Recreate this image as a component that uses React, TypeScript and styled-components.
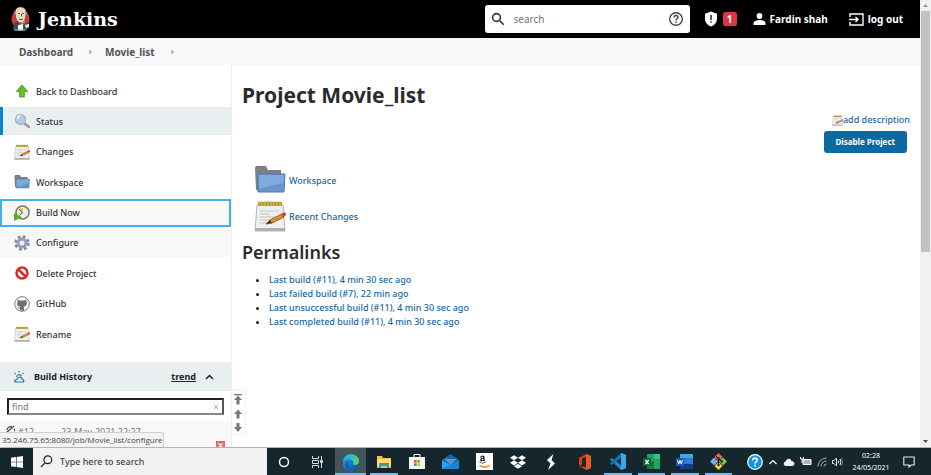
import React from "react";
import styled, { createGlobalStyle } from "styled-components";
import { SiDropbox } from "react-icons/si";
import { FaAmazon } from "react-icons/fa";

const Global = createGlobalStyle`
  * { box-sizing: border-box; }
  body { margin: 0; font-family: "Noto Sans", "Open Sans", sans-serif; font-size: 9px; color: #333; background: #fff; }
  button, input { font: inherit; color: inherit; }
  a { color: inherit; text-decoration: none; }
  svg { display: block; flex: none; }
`;

const Screen = styled.div`
  display: flex;
  flex-direction: column;
  height: 100vh;
  overflow: hidden;
`;
const Browser = styled.div`
  position: relative;
  display: flex;
  flex: 1;
  min-height: 0;
`;
const Page = styled.div`
  flex: 1;
  min-width: 0;
  display: flex;
  flex-direction: column;
`;
const Header = styled.header`
  display: flex;
  align-items: center;
  flex: none;
  height: 38px;
  padding: 0 17px 0 10px;
  background: #000;
  color: #fff;
`;
const Brand = styled.a`
  display: flex;
  align-items: center;
  gap: 7px;
  margin-right: auto;
  font: 700 19px/24px "DejaVu Serif", serif;
`;
const SearchBox = styled.label`
  display: flex;
  align-items: center;
  gap: 9px;
  width: 205px;
  height: 28px;
  padding: 0 6px;
  border-radius: 3px;
  background: #fff;
  color: #333;
`;
const SearchInput = styled.input`
  flex: 1;
  min-width: 0;
  padding: 0;
  border: 0;
  outline: 0;
  background: none;
  font-size: 10px;
  &::placeholder { color: #757575; opacity: 1; }
`;
const IconButton = styled.button`
  display: flex;
  align-items: center;
  justify-content: center;
  padding: 0;
  border: 0;
  background: none;
`;
const Alerts = styled.button`
  display: flex;
  align-items: center;
  gap: 5px;
  margin: 0 16px 0 14px;
  padding: 0;
  border: 0;
  background: none;
`;
const Badge = styled.span`
  width: 14px;
  border-radius: 2px;
  background: #dc3545;
  color: #fff;
  font-size: 10px;
  font-weight: 700;
  line-height: 14px;
  text-align: center;
`;
const HeaderLink = styled.a`
  display: flex;
  align-items: center;
  gap: 4px;
  font-size: 10px;
  font-weight: 700;
  line-height: 14px;
  & + & { margin-left: 21px; }
`;
const Breadcrumbs = styled.nav`
  display: flex;
  align-items: center;
  flex: none;
  height: 27px;
  padding-left: 19px;
  background: #f8f8f8;
  color: #4d545d;
  font-size: 10px;
  font-weight: 700;
`;
const Crumb = styled.a`
  display: flex;
  align-items: center;
  gap: 16px;
  margin-right: 12px;
`;
const Body = styled.div`
  display: flex;
  flex: 1;
  min-height: 0;
`;
const SidePanel = styled.aside`
  display: flex;
  flex-direction: column;
  flex: none;
  width: 232px;
  overflow: hidden;
  border-right: 1px solid #efefef;
`;
const Tasks = styled.ul`
  display: grid;
  align-content: space-between;
  height: 271px;
  margin: 12px 0 14px;
  padding: 0;
  flex: none;
  list-style: none;
`;
const shades = { plain: "transparent", active: "#e9eef1", hover: "#f8f8f8", focus: "#f8f8f8" };
const TaskLink = styled.a<{ $state: keyof typeof shades }>`
  display: flex;
  align-items: center;
  gap: 6px;
  height: 28px;
  padding-left: ${(p) => (p.$state === "active" || p.$state === "focus" ? 11 : 14)}px;
  background: ${(p) => shades[p.$state]};
  border: 0 solid ${(p) => (p.$state === "active" ? "#0b82cf" : "#45b0f0")};
  border-width: ${(p) => (p.$state === "focus" ? "2px" : p.$state === "active" ? "0 0 0 3px" : "0")};
  ${(p) => p.$state === "focus" && "padding-left: 12px;"}
  font-weight: 500;
`;
const HistoryHead = styled.div`
  display: flex;
  align-items: center;
  flex: none;
  height: 29px;
  padding: 0 17px 0 13px;
  background: #e9eef1;
  font-weight: 700;
  color: #222;
`;
const HistoryTitle = styled.h2`
  margin: 0 auto 0 9px;
  font-size: 9px;
`;
const Trend = styled.a`
  margin-right: 9px;
  text-decoration: underline;
`;
const Find = styled.label`
  display: flex;
  align-items: center;
  flex: none;
  height: 17px;
  margin: 7px 7px 6px;
  padding: 0 3px;
  border: 2px solid #222;
  border-bottom-color: #888;
  border-right-color: #555;
  color: #aaa;
`;
const FindInput = styled.input`
  flex: 1;
  min-width: 0;
  padding: 0;
  border: 0;
  outline: 0;
  &::placeholder { color: #777; opacity: 1; }
`;
const BuildTable = styled.table`
  width: 100%;
  border-collapse: collapse;
  background: #f8f8f8;
  color: #777;
`;
const BuildCell = styled.td<{ $w?: number }>`
  width: ${(p) => (p.$w ? p.$w + "px" : "auto")};
  height: 20px;
  padding: 4px 0 0;
  line-height: 13px;
  vertical-align: top;
  &:first-child { padding-left: 5px; }
`;
const CancelCell = styled(BuildCell)`
  height: 12px;
  padding: 0 6px 0 0;
`;
const Cancel = styled(IconButton)`
  width: 9px;
  height: 9px;
  margin-left: auto;
  background: #dc6a6a;
  color: #fff;
`;
const Pager = styled.div`
  position: absolute;
  left: 232px;
  bottom: 12px;
  display: grid;
  gap: 3px;
  padding: 4px 1px 1px 0;
  border: 1px solid #f0f0f0;
  border-left: 0;
  border-radius: 0 3px 3px 0;
  background: #fff;
`;
const Main = styled.main`
  flex: 1;
  min-width: 0;
  padding: 16px 10px;
`;
const Title = styled.h1`
  margin: 0;
  font-size: 21px;
  line-height: 29px;
  color: #2b2b2b;
`;
const Actions = styled.div`
  display: flex;
  flex-direction: column;
  align-items: flex-end;
  gap: 4px;
  margin-top: 3px;
  color: #20679f;
`;
const Describe = styled.a`
  display: flex;
  align-items: center;
  font-weight: 500;
  line-height: 14px;
`;
const Disable = styled.button`
  margin-right: 3px;
  padding: 0 12px;
  border: 0;
  border-radius: 3px;
  background: #0b6aa2;
  color: #fff;
  font-size: 8px;
  font-weight: 700;
  line-height: 22px;
`;
const Shortcuts = styled.div`
  display: grid;
  gap: 4px;
  justify-items: start;
  margin: 11px 0 0 12px;
`;
const Shortcut = styled.a`
  display: flex;
  align-items: center;
  gap: 3px;
  height: 32px;
  color: #20679f;
  font-weight: 500;
`;
const Subtitle = styled.h2`
  margin: 7px 0 8px;
  font-size: 18px;
  font-weight: 600;
  line-height: 26px;
  color: #2b2b2b;
`;
const Permalinks = styled.ul`
  margin: 0;
  padding-left: 27px;
  line-height: 14px;
  font-weight: 500;
  color: #222;
  a { color: #20679f; }
`;
const Scrollbar = styled.div`
  display: flex;
  flex-direction: column;
  align-items: center;
  flex: none;
  width: 11px;
  background: #f1f1f1;
  padding: 4px 0;
`;
const Thumb = styled.div`
  width: 9px;
  height: 55%;
  margin: 4px 0 auto;
  background: #c1c1c1;
`;
const StatusBubble = styled.div`
  position: absolute;
  left: 0;
  bottom: 0;
  padding: 0 1px 0 2px;
  border: 1px solid #d0d0d0;
  border-width: 1px 1px 0 0;
  border-radius: 0 3px 0 0;
  background: #f3f3f3;
  font: 400 8px/14px "Open Sans", sans-serif;
  color: #444;
`;
const Taskbar = styled.footer`
  display: flex;
  flex: none;
  height: 28px;
  border-top: 1px solid #b5b5b5;
  background: #16262d;
  color: #e8eaeb;
`;
const Start = styled(IconButton)`
  width: 33px;
  color: #fff;
`;
const TaskSearch = styled.label`
  display: flex;
  align-items: center;
  gap: 7px;
  width: 234px;
  padding-left: 7px;
  background: #f2f2f2;
  color: #333;
`;
const TaskSearchInput = styled.input`
  flex: 1;
  min-width: 0;
  padding: 0;
  border: 0;
  outline: 0;
  background: none;
  font-weight: 500;
  &::placeholder { color: #444; opacity: 1; }
`;
const Apps = styled.div`
  display: grid;
  grid-template-columns: repeat(14, 1fr);
  width: 468px;
`;
const AppButton = styled(IconButton)<{ $open?: boolean; $current?: boolean }>`
  margin: 0 3px;
  border-bottom: 2px solid ${(p) => (p.$open ? "#76b9ed" : "transparent")};
  padding-top: 2px;
  ${(p) => p.$current && "margin: 0 1px; background: #45535a;"}
`;
const Tray = styled.div`
  display: flex;
  align-items: center;
  gap: 5px;
  margin-left: auto;
  padding-right: 16px;
`;
const Clock = styled.time`
  width: 42px;
  margin: 0 6px 0 2px;
  font-size: 7px;
  line-height: 12px;
  text-align: center;
  white-space: pre-line;
  color: #fff;
`;

const Butler = () => (
  <svg width="21" height="28" viewBox="0 0 21 28">
    <ellipse cx="10.5" cy="14" rx="9" ry="9.5" fill="#d33833" />
    <path d="M3 24l1-6 4-2h6l4 2 1 5-5 3H6z" fill="#34505f" />
    <path d="M8 16l4 6 3-6z" fill="#f5f5f5" />
    <path d="M5 8c0-4 2-6 5.500-6S16 4 16 8l-.5 5c-.5 3-2.500 5-4.500 5S6.500 16 5.500 12z" fill="#efd9be" stroke="#3c2b22" strokeWidth=".6" />
    <path d="M5 5v5l-1-2zM15 4l2 4-1 4-1-3z" fill="#a99b8b" />
    <path d="M8 8.500h2m2 0h2M9 14q2 1.500 4 0M11.500 9v2.500" stroke="#3c2b22" strokeWidth=".8" fill="none" />
    <path d="M9 17l3 1.500 4-1.500v3l-4-1-3 1z" fill="#d33833" />
    <path d="M8 20h5v5.500H8z" fill="#f7f9fc" />
    <path d="M15 20l4-1v3l-3 1z" fill="#e8edf4" />
    <path d="M4 25h12" stroke="#7ca4b5" strokeWidth="1" />
  </svg>
);
const Folder = ({ s = 16 }) => (
  <svg width={s} height={s} viewBox="0 0 32 32">
    <path d="M1 4q0-2 2-2h9l2 4h13v20H2z" fill="#7d8183" />
    <path d="M4 10h27l-1 18H4z" fill="#6797cd" stroke="#4a7ab3" />
    <path d="M5 11h25l-.5 8Q18 21 5 25z" fill="#8ab2df" opacity=".7" />
  </svg>
);
const Notepad = ({ s = 16 }) => (
  <svg width={s} height={s} viewBox="0 0 32 32">
    <path d="M3 5h26l2 26H1z" fill="#efefef" stroke="#b5b5b5" />
    <path d="M1 28h30v3H1z" fill="#b0b0b0" />
    <path d="M4 2h24v4H4z" fill="#a29536" />
    <path d="M5 1v5m3-5v5m3-5v5m3-5v5m3-5v5m3-5v5m3-5v5m3-5v5" stroke="#d0c04a" strokeWidth="1.300" />
    <path d="M6 11h19M6 14h10M6 17h17M6 20h10M6 23h8" stroke="#c4c4c4" />
    <path d="M12 24l4-4 12-6 2 3-12 6z" fill="#dc9434" stroke="#8a6428" />
    <path d="M12 24l4-4 2 3z" fill="#463b2c" />
    <path d="M27 14l4-2 1.500 3-4 2z" fill="#e33b2e" />
  </svg>
);
const icons = {
  up: (
    <svg width="16" height="16" viewBox="0 0 16 16">
      <path d="M8 2l6 6.500h-3.500V14h-5V8.500H2z" fill="#5cb324" stroke="#438c1b" strokeWidth=".6" />
      <path d="M8 3l4 5H9.500v5H6.500" fill="#75cc38" opacity=".5" />
    </svg>
  ),
  lens: (
    <svg width="16" height="16" viewBox="0 0 16 16">
      <path d="M10 10l5 4" stroke="#96989b" strokeWidth="2.500" strokeLinecap="round" />
      <circle cx="6.500" cy="6.500" r="5" fill="#aecdef" stroke="#b1b6be" strokeWidth="1.500" />
      <path d="M3.500 6a3 3 0 013-3" stroke="#fff" fill="none" strokeWidth="1.500" />
    </svg>
  ),
  clock: (
    <svg width="16" height="16" viewBox="0 0 16 16">
      <circle cx="8.500" cy="7.500" r="6.500" fill="#f0f0df" stroke="#777b7e" strokeWidth="1.600" />
      <path d="M8.500 8L5 4l4-1z" fill="#dac23d" />
      <path d="M5 4l3.500 4-3 2" stroke="#555" fill="none" />
      <path d="M0 8l8 4-8 4z" fill="#52b51f" />
    </svg>
  ),
  gear: (
    <svg width="16" height="16" viewBox="0 0 16 16">
      <circle cx="8" cy="8" r="6" fill="none" stroke="#8187a6" strokeWidth="3.500" strokeDasharray="2.600 2.110" />
      <circle cx="8" cy="8" r="4" fill="#eee" stroke="#979cb8" strokeWidth="3" />
    </svg>
  ),
  stop: (
    <svg width="16" height="16" viewBox="0 0 16 16">
      <circle cx="8" cy="8" r="5.500" fill="#fff" stroke="#d52b2b" strokeWidth="2.500" />
      <path d="M4 4l8 8" stroke="#d52b2b" strokeWidth="2.500" />
    </svg>
  ),
  github: (
    <svg width="16" height="16" viewBox="0 0 16 16">
      <circle cx="8" cy="8" r="7.300" fill="#fff" stroke="#777" />
      <path d="M3.800 3.500l2 1.100h4.400l2-1.100c.6 1 .3 2 .4 2.600 1 3-.8 4.400-3 4.700.5.600.6 1.200.6 3.700H6v-2c-1.300.2-2-.3-2.500-1.300 1 .2 1.400.8 2.500.4 0-.4.200-.6.400-.8-2.800-.4-4-2-3-4.700z" fill="#707070" />
    </svg>
  ),
  note: <Notepad />,
  folder: <Folder />,
};
const tasks: [string, keyof typeof icons, keyof typeof shades][] = [
  ["Back to Dashboard", "up", "plain"],
  ["Status", "lens", "active"],
  ["Changes", "note", "plain"],
  ["Workspace", "folder", "plain"],
  ["Build Now", "clock", "focus"],
  ["Configure", "gear", "hover"],
  ["Delete Project", "stop", "plain"],
  ["GitHub", "github", "plain"],
  ["Rename", "note", "plain"],
];
const permalinks = [
  "Last build (#11), 4 min 30 sec ago",
  "Last failed build (#7), 22 min ago",
  "Last unsuccessful build (#11), 4 min 30 sec ago",
  "Last completed build (#11), 4 min 30 sec ago",
];

const Sep = () => (
  <svg width="4" height="6" viewBox="0 0 4 6"><path d="M.5 1L3 3 .5 5z" fill="#aaa" stroke="#aaa" strokeWidth=".5" /></svg>
);
const Magnifier = () => (
  <svg width="14" height="14" viewBox="0 0 14 14" fill="none" stroke="currentColor" strokeWidth="1.600"><circle cx="5.500" cy="5.500" r="3.900" /><path d="M8.500 8.500l4.300 4.300" /></svg>
);
const Arrow = ({ kind }: { kind: "top" | "up" | "down" }) => (
  <svg width="12" height="11" viewBox="0 0 12 11" fill="#777">
    {kind === "down" ? <path d="M4.500 1h3v4H10l-4 5-4-5h2.500z" /> : <path d="M6 1.500l4 4.500H7.500v4.500h-3V6H2z" />}
    {kind === "top" && <path d="M2 0h8v1.300H2z" />}
  </svg>
);
const ScrollArrow = ({ down = false }) => (
  <svg width="5" height="3" viewBox="0 0 5 3"><path d={down ? "M0 0h5L2.500 3z" : "M0 3h5L2.500 0z"} fill={down ? "#505050" : "#999"} /></svg>
);

const apps: { name: string; open?: boolean; current?: boolean; icon: React.ReactNode }[] = [
  { name: "Cortana", icon: <svg width="12" height="12" viewBox="0 0 12 12"><circle cx="6" cy="6" r="4.500" fill="none" stroke="#fff" strokeWidth="1.500" /></svg> },
  { name: "Task View", icon: <svg width="13" height="12" viewBox="0 0 13 12" fill="none" stroke="#d5dadc"><path d="M1.500 0v2.500h6V0M1.500 12V9.500h6V12M1.500 4.500h6v3h-6zM10.500 0v12" /><path d="M9.500 4.500h2v2h-2z" fill="#d5dadc" /></svg> },
  {
    name: "Edge", open: true, current: true,
    icon: (
      <svg width="18" height="18" viewBox="0 0 18 18">
        <defs>
          <linearGradient id="edgeTop" x2="1"><stop stopColor="#28a6e6" /><stop offset=".6" stopColor="#2fc3c5" /><stop offset="1" stopColor="#66d657" /></linearGradient>
          <linearGradient id="edgeBase" x2="1" y2="1"><stop stopColor="#1a9ae0" /><stop offset="1" stopColor="#0c4ea5" /></linearGradient>
        </defs>
        <path d="M1 9a8 8 0 0016 3c-3 2-7 1-7-3 0-3-8-4-9 0z" fill="url(#edgeBase)" />
        <path d="M1 9C1 4 5 1 9 1s8 3 8 7c0 3-2 4-4 4s-3-1-2-2.500C11 6 4 5 1 9z" fill="url(#edgeTop)" />
        <path d="M7 8c-2 4 1 8 5 8.500A8 8 0 014 15C2 11 4 8 7 8z" fill="#125fb5" />
      </svg>
    ),
  },
  { name: "File Explorer", open: true, icon: <svg width="16" height="14" viewBox="0 0 16 14"><path d="M1 1h5l1 2h8v10H1z" fill="#f5c043" /><path d="M1 4h14v7H1z" fill="#ffdc77" /><path d="M3 8h10v5h-2v-2H5v2H3z" fill="#3d91d1" /></svg> },
  { name: "Store", icon: <svg width="16" height="17" viewBox="0 0 16 17"><path d="M5 5V1.500h6V5" fill="none" stroke="#fff" /><path d="M0 4h16v12H0z" fill="#f4f4f4" /><path d="M5 7h2.700v2.700H5z" fill="#f25022" /><path d="M8.300 7H11v2.700H8.300z" fill="#7fba00" /><path d="M5 10.300h2.700V13H5z" fill="#00a4ef" /><path d="M8.300 10.300H11V13H8.300z" fill="#ffb900" /></svg> },
  { name: "Mail", icon: <svg width="17" height="16" viewBox="0 0 17 16"><path d="M0 6l8.500-6L17 6z" fill="#1268b8" /><path d="M0 6h17l-8.500 5z" fill="#0f5ca8" /><path d="M2 5h13l-6.500 6z" fill="#eef6fc" opacity=".35" /><path d="M0 6l8.500 5L17 6v9H0z" fill="#2aa7ec" /><path d="M0 15l17-9v9z" fill="#1a83d2" /></svg> },
  { name: "Amazon", icon: <svg width="17" height="17" viewBox="0 0 17 17"><path d="M0 0h17v17H0z" fill="#fff" /><g color="#222"><FaAmazon x="2" y="2" width="13" height="13" /></g><path d="M3.500 12.500q5 3 10 0" fill="none" stroke="#f29a2e" strokeWidth="1.800" /></svg> },
  { name: "Dropbox", icon: <SiDropbox size="16" color="#fff" /> },
  { name: "Stripes", icon: <svg width="10" height="16" viewBox="0 0 10 16"><path d="M7.500 0L1 6l3.500 3.500L2 16l7-6.500L5.500 6z" fill="#fff" /></svg> },
  { name: "Office", icon: <svg width="14" height="16" viewBox="0 0 14 16"><path d="M1 4l7-4 5 2v12l-5 2-7-4 7 1V3L4 4.500v6L1 12z" fill="#e03c13" /><path d="M8 0l5 2v12l-5 2z" fill="#f0591e" /></svg> },
  { name: "Visual Studio Code", open: true, icon: <svg width="17" height="17" viewBox="0 0 17 17"><path d="M12 0l5 2v13l-5 2L1 6.500 2.500 5 12 12z" fill="#2489ca" /><path d="M12 0v5L2.500 12 1 10.500z" fill="#1070b3" /><path d="M12 0l5 2v13l-5 2z" fill="#3ba6f0" /></svg> },
  { name: "Excel", open: true, icon: <svg width="17" height="15" viewBox="0 0 17 15"><path d="M4 0h13v15H4z" fill="#21a366" /><path d="M4 7h7v8H4z" fill="#107c41" /><path d="M11 0h6v5h-6z" fill="#33c481" /><path d="M0 4h8v8H0z" fill="#0d6537" /><path d="M2.500 6l3.200 4.200M5.700 6l-3.200 4.200" stroke="#fff" strokeWidth="1.300" /></svg> },
  { name: "Word", open: true, icon: <svg width="17" height="15" viewBox="0 0 17 15"><path d="M4 0h13v15H4z" fill="#2b7cd3" /><path d="M4 0h13v4H4z" fill="#41a5ee" /><path d="M4 10h13v5H4z" fill="#103f91" /><path d="M0 4h8v8H0z" fill="#185abd" /><path d="M1.500 6l1.200 4L4 6.500 5.300 10l1.200-4" stroke="#fff" fill="none" /></svg> },
  { name: "Git", open: true, icon: <svg width="17" height="17" viewBox="0 0 17 17"><path d="M8.500 0l4 4-4 4.500-4-4.500z" fill="#ec6656" /><path d="M4 4.500l4 4-4 4-4-4z" fill="#77aaf0" /><path d="M13 4.500l4 4-4 4-4-4z" fill="#7cc944" /><path d="M8.500 9l4 4-4 4-4-4z" fill="#f5d24a" /><path d="M6 3l5.500 5.500M8.500 6v7" stroke="#222" strokeWidth="1" /><circle cx="8.500" cy="5.500" r="1.200" fill="#222" /><circle cx="11.800" cy="8.500" r="1.200" fill="#222" /><circle cx="8.500" cy="12" r="1.200" fill="#222" /></svg> },
];

export default function App() {
  return (
    <Screen>
      <Global />
      <Browser>
        <Page>
          <Header>
            <Brand href="#"><Butler />Jenkins</Brand>
            <SearchBox>
              <Magnifier />
              <SearchInput placeholder="search" aria-label="Search" />
              <IconButton aria-label="Help">
                <svg width="16" height="16" viewBox="0 0 16 16" fill="none" stroke="#3f474f" strokeWidth="1.400"><circle cx="8" cy="8" r="6.300" /><path d="M6 6.500a2 2 0 114 0c0 1.200-2 1.400-2 3M8 10.500v1.400" /></svg>
              </IconButton>
            </SearchBox>
            <Alerts aria-label="Security warnings">
              <svg width="14" height="16" viewBox="0 0 14 16"><path d="M7 .5l6 2.300v4.700c0 3.800-2.500 6.800-6 8-3.500-1.200-6-4.200-6-8V2.800z" fill="#fff" /><path d="M7 4v5M7 10.200v1.600" stroke="#222" strokeWidth="1.500" /></svg>
              <Badge>1</Badge>
            </Alerts>
            <HeaderLink href="#user">
              <svg width="13" height="12" viewBox="0 0 13 12" fill="#fff"><circle cx="6.500" cy="3" r="2.900" /><path d="M.5 12v-2c0-2 4-3 6-3s6 1 6 3v2z" /></svg>
              Fardin shah
            </HeaderLink>
            <HeaderLink href="#logout">
              <svg width="15" height="13" viewBox="0 0 15 13" fill="none" stroke="#fff" strokeWidth="1.400"><path d="M1 4V1h13v11H1V9M0 6.500h9M6.500 4l2.500 2.500L6.500 9" /></svg>
              log out
            </HeaderLink>
          </Header>
          <Breadcrumbs aria-label="Breadcrumb">
            <Crumb href="#dashboard">Dashboard<Sep /></Crumb>
            <Crumb href="#movie">Movie_list<Sep /></Crumb>
          </Breadcrumbs>
          <Body>
            <SidePanel>
              <Tasks>
                {tasks.map(([label, icon, state]) => (
                  <li key={label}><TaskLink href="#" $state={state}>{icons[icon]}{label}</TaskLink></li>
                ))}
              </Tasks>
              <HistoryHead>
                <svg width="12" height="12" viewBox="0 0 12 12" fill="none" stroke="#20739f" strokeWidth="1.200"><path d="M2 11h8.500q1-2-1.500-3-1-3-3.500-1.500Q4 7 4 8.500 1 8.500 2 11zM3.500 6a2.700 2.700 0 015-1M6 0v1.500M1.500 2l1 1M10.500 2l-1 1" /></svg>
                <HistoryTitle>Build History</HistoryTitle>
                <Trend href="#trend">trend</Trend>
                <IconButton aria-label="Collapse"><svg width="9" height="6" viewBox="0 0 9 6" fill="none" stroke="#222" strokeWidth="1.500"><path d="M1 5l3.500-3.500L8 5" /></svg></IconButton>
              </HistoryHead>
              <Find>
                <FindInput placeholder="find" aria-label="Find build" />
                <IconButton aria-label="Clear"><svg width="6" height="6" viewBox="0 0 6 6" stroke="#aaa"><path d="M1 1l4 4M5 1L1 5" /></svg></IconButton>
              </Find>
              <BuildTable>
                <tbody>
                  <tr>
                    <BuildCell $w={18}><svg width="10" height="10" viewBox="0 0 10 10" fill="none" stroke="#444" strokeWidth="1.200"><path d="M1 8L9 1M2 5a3.500 3.500 0 015-3M4 9a3.500 3.500 0 005-5" /></svg></BuildCell>
                    <BuildCell $w={43}><a href="#12">#12</a></BuildCell>
                    <BuildCell>23-May-2021 22:27</BuildCell>
                  </tr>
                  <tr>
                    <CancelCell colSpan={3}>
                      <Cancel aria-label="Cancel build"><svg width="5" height="5" viewBox="0 0 5 5" stroke="#fff" strokeWidth="1.200"><path d="M0 0l5 5M5 0L0 5" /></svg></Cancel>
                    </CancelCell>
                  </tr>
                </tbody>
              </BuildTable>
            </SidePanel>
            <Main>
              <Title>Project Movie_list</Title>
              <Actions>
                <Describe href="#describe"><Notepad s={11} />add description</Describe>
                <Disable>Disable Project</Disable>
              </Actions>
              <Shortcuts>
                <Shortcut href="#ws"><Folder s={32} />Workspace</Shortcut>
                <Shortcut href="#changes"><Notepad s={32} />Recent Changes</Shortcut>
              </Shortcuts>
              <Subtitle>Permalinks</Subtitle>
              <Permalinks>
                {permalinks.map((p) => <li key={p}><a href="#">{p}</a></li>)}
              </Permalinks>
            </Main>
          </Body>
        </Page>
        <Scrollbar><ScrollArrow /><Thumb /><ScrollArrow down /></Scrollbar>
        <Pager>
          <IconButton aria-label="Newest builds"><Arrow kind="top" /></IconButton>
          <IconButton aria-label="Newer builds"><Arrow kind="up" /></IconButton>
          <IconButton aria-label="Older builds"><Arrow kind="down" /></IconButton>
        </Pager>
        <StatusBubble>35.246.75.65:8080/job/Movie_list/configure</StatusBubble>
      </Browser>
      <Taskbar>
        <Start aria-label="Start"><svg width="12" height="12" viewBox="0 0 12 12" fill="#fff"><path d="M0 1.700l5-.7v4.700H0zM5.600.9L12 0v5.700H5.600zM0 6.300h5V11l-5-.7zM5.600 6.300H12V12l-6.400-.9z" /></svg></Start>
        <TaskSearch>
          <svg width="13" height="13" viewBox="0 0 13 13" fill="none" stroke="#222" strokeWidth="1.200"><circle cx="7.800" cy="4.800" r="3.900" /><path d="M5 7.800L1 12" /></svg>
          <TaskSearchInput placeholder="Type here to search" aria-label="Type here to search" />
        </TaskSearch>
        <Apps>
          {apps.map((a) => (
            <AppButton key={a.name} aria-label={a.name} $open={a.open} $current={a.current}>{a.icon}</AppButton>
          ))}
        </Apps>
        <Tray>
          <svg width="16" height="16" viewBox="0 0 16 16"><circle cx="8" cy="8" r="7.300" fill="#1494dc" stroke="#fff" strokeWidth="1.200" /><path d="M5.800 6.300a2.200 2.200 0 114.400 0c0 1.500-2.200 1.500-2.200 3.200M8 10.800v1.600" fill="none" stroke="#fff" strokeWidth="1.600" /></svg>
          <svg width="10" height="6" viewBox="0 0 10 6" fill="none" stroke="#fff" strokeWidth="1.200"><path d="M1.500 5L5 1.500 8.500 5" /></svg>
          <svg width="12" height="8" viewBox="0 0 12 8"><path d="M2.500 8a2.300 2.300 0 010-4.500C4 0 7.500 0 8.500 3c3 0 4 3 1.500 5z" fill="#eee" /></svg>
          <svg width="12" height="9" viewBox="0 0 12 9"><path d="M3 2.500h8v5H3z" fill="#aeb5b8" stroke="#fff" /><path d="M.5 0v2h3V0M2 2v4" stroke="#fff" fill="none" /></svg>
          <svg width="10" height="10" viewBox="0 0 10 10" fill="none" stroke="#aeb5b8"><path d="M1 9.500A8.500 8.500 0 019.500 1M4 9.500A5.500 5.500 0 019.500 4M7 9.500A2.500 2.500 0 019.500 7" /></svg>
          <svg width="11" height="10" viewBox="0 0 11 10" fill="none" stroke="#e8eaeb"><path d="M.5 3.500H2L4.500 1v8L2 6.500H.5zM6.300 3.500q1 1.500 0 3M8 2q2 3 0 6" /><path d="M9.500 1q2 4 0 8" stroke="#77858b" /></svg>
          <Clock>{"02:28\n24/05/2021"}</Clock>
          <svg width="12" height="12" viewBox="0 0 12 12" fill="none" stroke="#e8eaeb" strokeWidth="1.100"><path d="M.8 1h10.400v8H8L6 11V9H.8z" /></svg>
        </Tray>
      </Taskbar>
    </Screen>
  );
}
